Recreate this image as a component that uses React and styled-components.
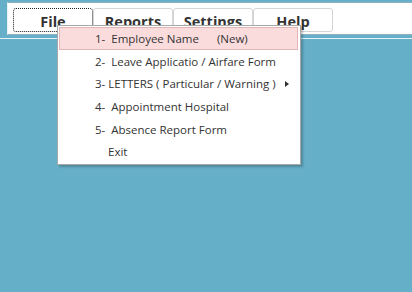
import React from "react";
import styled, { createGlobalStyle } from "styled-components";

const Global = createGlobalStyle`
  html, body { margin: 0; padding: 0; }
  body { background: #65afc8; font-family: "Open Sans", "Noto Sans", sans-serif; }
`;

const Page = styled.div`
  position: relative;
  width: 412px;
  height: 292px;
  background: #65afc8;
  overflow: hidden;
  padding-top: 2px;
  box-sizing: border-box;
`;

const Strip = styled.div`
  margin-left: 7px;
  height: 26px;
  background: #fff;
  border-top: 1px solid #8fb4c0;
  border-bottom: 1px solid #8fb4c0;
  border-left: 1px solid #e8f3f7;
  display: flex;
  align-items: flex-start;
  padding: 5px 0 0 5px;
  box-sizing: content-box;
`;

const Rule = styled.div`
  margin-top: 3px;
  height: 1px;
  background: #e6f2f6;
`;

const MenuButton = styled.div`
  width: 80px;
  height: 24px;
  box-sizing: border-box;
  border: 1px solid #d4d4d4;
  border-radius: 3px;
  display: flex;
  justify-content: center;
  align-items: center;
  font-weight: 700;
  font-size: 14.5px;
  color: #333;
  position: relative;
  ${(p) =>
    p.$focused &&
    `outline: 1px dotted #222; outline-offset: -1px; border-color: transparent;`}
`;

const Label = styled.span`
  margin-top: 3px;
`;

const Dropdown = styled.div`
  position: absolute;
  left: 57px;
  top: 25px;
  width: 244px;
  height: 140px;
  box-sizing: border-box;
  background: #fff;
  border: 1px solid #a7a7a7;
  box-shadow: 2px 2px 2px rgba(0, 0, 0, 0.22);
  padding: 1px;
  display: flex;
  flex-direction: column;
`;

const Item = styled.div`
  height: 23px;
  box-sizing: border-box;
  display: flex;
  align-items: center;
  padding-left: ${(p) => (p.$indent ? 48 : 35)}px;
  font-size: 11.5px;
  color: #333;
  white-space: pre;
  position: relative;
  border: 1px solid ${(p) => (p.$active ? "#e3b7b9" : "transparent")};
  background: ${(p) => (p.$active ? "#fbdcdd" : "transparent")};
  margin-right: 1px;
`;

const Arrow = styled.span`
  position: absolute;
  right: 8px;
  top: 8px;
  width: 0;
  height: 0;
  border-top: 3.5px solid transparent;
  border-bottom: 3.5px solid transparent;
  border-left: 4px solid #333;
`;

export default function App() {
  return (
    <Page>
      <Global />
      <Strip>
        <MenuButton $focused>
          <Label>File</Label>
        </MenuButton>
        <MenuButton>
          <Label>Reports</Label>
        </MenuButton>
        <MenuButton>
          <Label>Settings</Label>
        </MenuButton>
        <MenuButton>
          <Label>Help</Label>
        </MenuButton>
      </Strip>
      <Rule />
      <Dropdown>
        <Item $active>{"1-  Employee Name      (New)"}</Item>
        <Item>{"2-  Leave Applicatio / Airfare Form"}</Item>
        <Item>
          {"3- LETTERS ( Particular / Warning )"}
          <Arrow />
        </Item>
        <Item>{"4-  Appointment Hospital"}</Item>
        <Item>{"5-  Absence Report Form"}</Item>
        <Item $indent>Exit</Item>
      </Dropdown>
    </Page>
  );
}
